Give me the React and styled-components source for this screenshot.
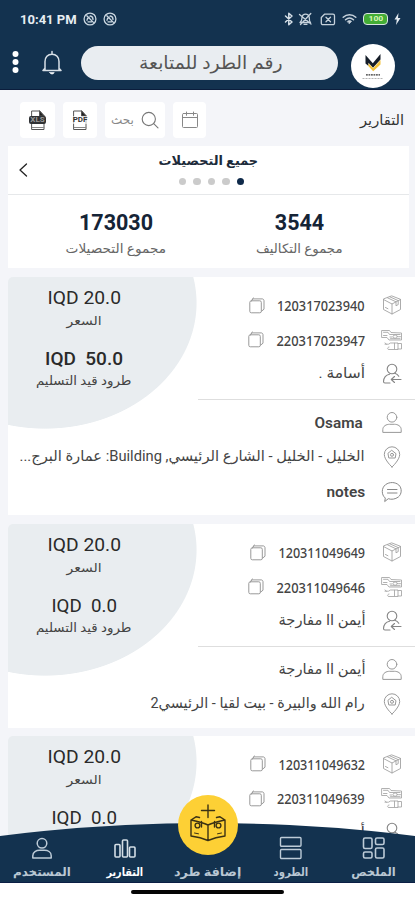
import React, { useLayoutEffect, useRef, useState } from 'react';
import styled, { createGlobalStyle } from 'styled-components';

const navy = '#13324f';
const sans = `Roboto, "DejaVu Sans", sans-serif`;

const GlobalStyle = createGlobalStyle`
  * { box-sizing: border-box; }
  body { margin: 0; background: #f4f5f9; font-family: ${sans}; }
`;

const TextBox = styled.span`
  display: flex;
  justify-content: center;
  flex: none;
  width: ${(p) => p.$width}px;
  height: ${(p) => p.$line || 20}px;
  line-height: ${(p) => p.$line || 20}px;
  font-family: ${(p) => p.$family || sans};
  font-size: ${(p) => p.$size}px;
  font-weight: ${(p) => p.$weight || 400};
  color: ${(p) => p.$color || '#444'};
  white-space: pre;
`;
const TextRun = styled.span`
  flex: none;
  display: block;
`;

/* Keeps a label at its set width whatever font the device falls back to. */
function Text({ width, size, weight, color, line, family, dir, children }) {
  const ref = useRef(null);
  const [scale, setScale] = useState(1);
  useLayoutEffect(() => {
    const natural = ref.current.offsetWidth;
    if (natural) setScale(width / natural);
  }, [width, children]);
  return (
    <TextBox $width={width} $size={size} $weight={weight} $color={color} $line={line} $family={family} dir={dir}>
      <TextRun ref={ref} style={{ transform: `scaleX(${scale})` }}>{children}</TextRun>
    </TextBox>
  );
}

const Screen = styled.div`
  position: relative;
  display: flex;
  flex-direction: column;
  width: 415px;
  height: 900px;
  overflow: hidden;
  background: #f4f5f9;
`;
const Header = styled.header`
  flex: none;
  height: 90px;
  background: ${navy};
  border-bottom: 1px solid #0b1d3c;
`;
const StatusBar = styled.div`
  display: flex;
  align-items: center;
  height: 38px;
  padding: 0 14px 0 20px;
`;
const StatusLeft = styled.div`
  display: flex;
  align-items: center;
  gap: 6px;
  flex: 1;
`;
const StatusRight = styled.div`
  display: flex;
  align-items: center;
`;
const Gap = styled.span`
  flex: none;
  width: ${(p) => p.$w}px;
`;
const AppBar = styled.div`
  display: flex;
  align-items: flex-start;
  padding: 6px 19px 0 11px;
  height: 51px;
`;
const BarSlot = styled.span`
  display: flex;
  flex: none;
  padding-top: 6px;
`;
const SearchPill = styled.div`
  display: flex;
  align-items: center;
  justify-content: center;
  width: 257px;
  height: 34px;
  margin: 2px 13px 0 19px;
  padding: 0 0 1px 2px;
  border-radius: 17px;
  background: #e9edf1;
`;
const Avatar = styled.div`
  display: flex;
  width: 44px;
  height: 44px;
  border-radius: 50%;
  background: #fff;
`;
const Toolbar = styled.div`
  display: flex;
  align-items: center;
  flex: none;
  height: 56px;
  padding: 4px 11px 0 20px;
`;
const ToolButton = styled.div`
  display: flex;
  align-items: center;
  justify-content: center;
  gap: 7px;
  width: ${(p) => p.$w}px;
  height: 36px;
  margin-right: 8px;
  border-radius: 4px;
  background: #fff;
`;
const Spacer = styled.div`
  flex: 1;
`;
const Summary = styled.section`
  flex: none;
  width: 401px;
  height: 122px;
  margin-left: 8px;
  background: #fff;
`;
const SummaryHead = styled.div`
  display: grid;
  grid-template-columns: 30px 1fr 30px;
  align-items: center;
  height: 49px;
  border-bottom: 1px solid #e6e8ea;
`;
const Carousel = styled.div`
  display: flex;
  flex-direction: column;
  align-items: center;
  gap: 7px;
  padding-bottom: 4px;
`;
const BackSlot = styled.div`
  display: flex;
  justify-content: center;
`;
const Dots = styled.div`
  display: flex;
  gap: 7px;
  padding-left: 6px;
`;
const Dot = styled.span`
  width: 7.6px;
  height: 7.6px;
  border-radius: 50%;
  background: ${(p) => (p.$on ? '#0f2a4a' : '#cbcbcb')};
`;
const Totals = styled.div`
  display: grid;
  grid-template-columns: 216px 151px;
  padding-top: 16px;
`;
const Total = styled.div`
  display: flex;
  flex-direction: column;
  align-items: center;
  gap: 4px;
`;
const Card = styled.article`
  display: grid;
  grid-template-columns: 152px 1fr;
  flex: none;
  width: 407px;
  margin: ${(p) => p.$top}px 0 0 8px;
  padding-bottom: 6px;
  border-top-left-radius: 5px;
  background: radial-gradient(ellipse 152px 126px at 37px 26px, #e9edf0 99.4%, #fff 100%);
`;
const Prices = styled.div`
  display: flex;
  flex-direction: column;
  align-items: center;
  padding-top: 11px;
`;
const PriceGap = styled.div`
  height: ${(p) => p.$h}px;
`;
const Shipment = styled.div`
  display: flex;
  flex-direction: column;
  padding: 11px 0 7px;
`;
const Recipient = styled.div`
  grid-column: 1 / -1;
  padding-top: 6px;
`;
const Rule = styled.div`
  grid-column: 1 / -1;
  height: 1px;
  margin-left: 190px;
  background: #dedede;
`;
const Row = styled.div`
  display: flex;
  align-items: center;
  direction: rtl;
  height: 34.5px;
  padding-right: 12px;
`;
const RowIcon = styled.span`
  display: flex;
  flex: none;
  width: 22px;
  margin-left: ${(p) => p.$gap || 16}px;
`;
const CopyIcon = styled.span`
  display: flex;
  margin-right: 12px;
`;
const Nav = styled.nav`
  position: absolute;
  left: 0;
  bottom: 0;
  width: 415px;
  height: 77px;
`;
const NavItems = styled.div`
  direction: rtl;
  display: grid;
  grid-template-columns: repeat(5, 83px);
  height: 60px;
  background: ${navy};
  border-bottom: 1px solid #0b1f45;
  clip-path: circle(1670px at 50% 1670px);
`;
const NavItem = styled.div`
  display: flex;
  flex-direction: column;
  align-items: center;
  justify-content: flex-end;
  gap: 2px;
`;
const HomeArea = styled.div`
  display: flex;
  justify-content: center;
  height: 17px;
  padding-top: 7px;
  background: #fff;
`;
const HomeBar = styled.div`
  width: 153px;
  height: 4px;
  border-radius: 2px;
  background: #050505;
`;
const AddButton = styled.div`
  position: absolute;
  left: 178px;
  top: -28px;
  display: flex;
  align-items: center;
  justify-content: center;
  width: 60px;
  height: 60px;
  border-radius: 50%;
  background: #fdd035;
`;

function Svg({ w, h, stroke = '#999', sw = 1, fill = 'none', children }) {
  return (
    <svg width={w} height={h} viewBox={`0 0 ${w} ${h}`} fill={fill} stroke={stroke} strokeWidth={sw} strokeLinecap="round" strokeLinejoin="round">
      {children}
    </svg>
  );
}

const MutedRing = () => (
  <Svg w={14} h={14} stroke="#cbd7e1" sw={1.3}>
    <circle cx="7" cy="7" r="5.9" />
    <path d="M3.8 3.8l6.6 6.6M4 8.3c0-2 1-2.8 2.2-3.2M7.2 4c2 .3 2.8 1.5 2.8 3.4M5 9.8h3.6" />
  </Svg>
);
const Bluetooth = () => (
  <Svg w={10} h={14} stroke="#d5dfe7" sw={1.5}><path d="M1.5 4l6.500 6-3.200 2.800V1.200L8 4l-6.500 6" /></Svg>
);
const MutedBell = () => (
  <Svg w={15} h={14} stroke="#c6d2dc" sw={1.3}>
    <path d="M2 10.500h10.500c-1.400-1.500-1.200-3-1.200-5C11 3.500 9.500 2.200 7.500 2.200S4.200 3.500 4 5.500c0 2 .1 3.500-2 5M6 12.300h3M1.500 2.500l11.500 9.500M12.800 1.500L2.500 12.500" />
  </Svg>
);
const NoSim = () => (
  <Svg w={16} h={13} stroke="#c6d2dc" sw={1.3}>
    <path d="M4.500 1.200H13a1.500 1.500 0 0 1 1.500 1.500v7.500a1.500 1.500 0 0 1-1.500 1.500H2.800a1.500 1.500 0 0 1-1.500-1.500V4.500z" />
    <path d="M6 4.300l4.500 4.500M10.500 4.300L6 8.800" />
  </Svg>
);
const Wifi = () => (
  <Svg w={15} h={12} stroke="#c6d2dc" sw={1.5}>
    <path d="M1.200 4.300c3.700-3.400 8.900-3.400 12.600 0M3.500 6.700c2.400-2.100 5.600-2.100 8 0" />
    <path d="M5.500 8.300c1.300-1 2.700-1 4 0l-2 2.200z" fill="#c6d2dc" strokeWidth=".8" />
  </Svg>
);
const BatteryShell = styled.span`
  display: flex;
  align-items: center;
  justify-content: center;
  width: 25px;
  height: 12px;
  border: 1.5px solid #d9e4e2;
  border-radius: 4px;
  background: #43ad35;
`;
const Bolt = () => (
  <Svg w={7} h={12} stroke="none" fill="#e3eaf0"><path d="M4.500 0L.5 6.500h2.300L2 12l4.500-7H4z" /></Svg>
);
const Kebab = () => (
  <Svg w={9} h={26} stroke="none" fill="#fff">
    <circle cx="4.500" cy="4" r="3" /><circle cx="4.500" cy="12" r="3" /><circle cx="4.500" cy="20" r="3" />
  </Svg>
);
const Bell = () => (
  <Svg w={20} h={26} stroke="#d8e0e7" sw={1.5}>
    <path d="M1 20.500h18M3 20.200V11.500c0-4 2.700-7.300 7-7.300s7 3.300 7 7.300v8.700M10 4V1.500M1 20.500l2-2.200M19 20.500l-2-2.200" />
    <path d="M7.800 22.500h4.400c-.5 2-3.900 2-4.400 0z" fill="#fff" strokeWidth=".8" />
  </Svg>
);
const Logo = () => (
  <Svg w={44} h={44} stroke="none">
    <path d="M14.500 11l7.300 8.300L29.500 10v5.600L22 23.700l-4.500-5V22l-3-2.500z" fill="#151d28" />
    <path d="M17.500 19.300l4.700 5L29.500 16v4.600l-7.300 6.600-4.700-5z" fill="#f2c23b" />
    <path d="M15 30.800h14" stroke="#333" strokeWidth="1.200" strokeDasharray="1.800 .7" strokeLinecap="butt" />
    <path d="M11.500 34.500h21" stroke="#aaa" strokeWidth=".9" strokeDasharray="2 1" strokeLinecap="butt" />
  </Svg>
);
const FileBadge = styled.span`
  display: grid;
  place-items: center;
  width: 18px;
  height: 22px;
`;
const FileArt = styled.span`
  grid-area: 1 / 1;
  display: flex;
`;
const FileTag = styled.span`
  grid-area: 1 / 1;
  z-index: 1;
  width: ${(p) => (p.$solid ? 17 : 18)}px;
  height: 8px;
  border-radius: 2px;
  background: ${(p) => (p.$solid ? '#303234' : 'rgba(255,255,255,.6)')};
  color: ${(p) => (p.$solid ? '#999' : '#333')};
  font: 700 8px/8px Roboto, sans-serif;
  text-align: center;
`;
const FileIcon = ({ label, solid }) => (
  <FileBadge>
    <FileArt>
      <Svg w={16} h={21} stroke="#555" sw={1}>
        <path d="M2 1h7.500L14 6v13.500H2z" /><path d="M9.500 1v5H14z" fill="#222" /><path d="M2.300 17.500h11.500" stroke="#888" />
      </Svg>
    </FileArt>
    <FileTag $solid={solid}>{label}</FileTag>
  </FileBadge>
);
const Magnifier = () => (
  <Svg w={18} h={18} stroke="#777" sw={1.1}><circle cx="7.800" cy="8" r="6.600" /><path d="M12.700 12.700l4.300 4.200" /></Svg>
);
const Calendar = () => (
  <Svg w={18} h={18} stroke="#888" sw={1}><rect x="1.500" y="2.500" width="15" height="14" rx="1" /><path d="M1.500 6.500h15M5.500 1v3.300M12.500 1v3.300" /></Svg>
);
const Chevron = () => (
  <Svg w={10} h={14} stroke="#222" sw={1.3}><path d="M8.500 1L2 7l6.500 6" /></Svg>
);
const Copy = () => (
  <Svg w={16} h={17} stroke="#999" sw={1}>
    <rect x=".8" y="3.800" width="11.500" height="12" rx="1.500" /><path d="M2.800 3.500l1-1.600h9.400c1 0 1.800.8 1.800 1.800v8.500l-2.500 2M3 2.400L4.500 1" />
  </Svg>
);
const BoxIcon = () => (
  <Svg w={22} h={20} stroke="#a3a3a3" sw={0.9}>
    <path d="M11 1l8.500 3.300v10.200L11 19l-8.500-4.500V4.300zM2.500 4.500L11 9l8.500-4.500M11 9v10M6.500 2.800L15 6.800v4l2.200-1.200V5.600L9 1.900M4.500 12.500l2.400 1.200" />
  </Svg>
);
const TransferIcon = () => (
  <Svg w={22} h={22} stroke="#a8a8a8" sw={0.9}>
    <path d="M1 1.500h7.500l1.500 2 10.500.5v7H8L6 8.500H1zM2.500 3.300h4.500l1.500 2.200h10.500M2.500 6.500h3.500M9 8h2M9.500 9.700h9.500M17.500 7.700h2" />
    <ellipse cx="14.200" cy="7.600" rx="2.200" ry="1.600" />
    <path d="M4 15.200h3.500l2-1.200h4v6.500H8c-2.300 0-1.500-2.500 0-2.500M13.500 14H17v6.500h-3.500M17 14.500h3.500v5.500H17M4 14l1.500 1.200" />
  </Svg>
);
const SenderIcon = () => (
  <Svg w={22} h={22} stroke="#858585" sw={1.1}>
    <circle cx="11" cy="6" r="4.800" /><path d="M8.500 11.300C5 12 2.800 14.500 2.500 18.500c0 1 .5 1.500 1.500 1.500h5M13.800 10.300c1.800.6 3 1.500 4 3M10.500 16.500h9.500M13.500 13.500l-3.200 3 3.200 3" />
  </Svg>
);
const PersonIcon = ({ stroke = '#999', sw = 1 }) => (
  <Svg w={22} h={23} stroke={stroke} sw={sw}>
    <circle cx="11" cy="6.300" r="4.800" /><path d="M1.800 21v-2.300c0-3.700 3.500-5.400 6.800-5.400h4.800c3.300 0 6.800 1.700 6.800 5.400V21z" />
  </Svg>
);
const PinIcon = () => (
  <Svg w={22} h={22} stroke="#999"><path d="M11 21S3.300 14 3.300 8.500a7.700 7.700 0 0 1 15.400 0C18.700 14 11 21 11 21z" /><path d="M11 4.500l4 3.200-.8 4.300H7.800L7 7.700z" /><circle cx="11" cy="8.800" r="1.500" /></Svg>
);
const NoteIcon = () => (
  <Svg w={22} h={22} stroke="#888"><path d="M4 16.800C.2 13.800.3 7 4.500 3.700c4-3 9.800-2.800 13.300.3 3.500 3.300 3 9.300-.5 12-3 2.300-7 2.800-10 1.700L4 20.300zM6.500 8.500h9.500M6.500 12h9.500" /></Svg>
);
const GridIcon = () => (
  <Svg w={24} h={24} stroke="#bdcbd7" sw={1.6}>
    <rect x="1.500" y="2" width="8.500" height="10.500" rx="1.500" /><rect x="13.500" y="2" width="8.500" height="6.500" rx="1.500" />
    <rect x="1.500" y="16" width="8.500" height="6" rx="1.500" /><rect x="13.500" y="12" width="8.500" height="10" rx="1.500" />
  </Svg>
);
const StackIcon = () => (
  <Svg w={24} h={24} stroke="#bdcbd7" sw={1.4}><rect x="1.500" y="1.500" width="20.500" height="8.800" rx="1" /><rect x="1.500" y="13.500" width="20.500" height="9" rx="1" /></Svg>
);
const BarsIcon = () => (
  <Svg w={24} h={22} stroke="#d4dee6" sw={1.6}><rect x="2" y="6.500" width="5" height="12.500" rx="1" /><rect x="9.500" y="2" width="5" height="17" rx="1" /><rect x="16.500" y="9" width="5.500" height="10" rx="1" /></Svg>
);
const ParcelPlus = () => (
  <Svg w={40} h={42} stroke="#3b3214" sw={1.4}>
    <path d="M20 1v12.500M13.500 6.500h13" />
    <path d="M11.500 13.500L8 12.800 3 16M28.500 13.500l3.500-.7 5 3.200M3 16c6 1.200 12 2.500 17 5 5-2.500 11-3.800 17-5M3 16v16c6 .8 12 2.300 17 4.500 5-2.200 11-3.700 17-4.500V16M20 21v15.500" />
    <path d="M13.500 17.500v5.500M26.500 17.500v5.500" />
    <circle cx="9.500" cy="21.500" r="2.400" /><circle cx="30.500" cy="21.500" r="2.400" />
    <path d="M6.500 29l4 .8M33.500 29l-4 .8" strokeWidth="1" />
  </Svg>
);

const numberFont = `"Noto Sans", "DejaVu Sans", sans-serif`;

const cards = [
  {
    top: 9, due: ['IQD  50.0', 78], weight: 500,
    ids: [['120317023940', 88], ['220317023947', 89]],
    sender: ['أسامة .', 47],
    recipient: [
      { icon: PersonIcon, text: 'Osama', w: 48, gap: 18, latin: true },
      { icon: PinIcon, text: 'الخليل - الخليل - الشارع الرئيسي, Building: عمارة البرج...', w: 345 },
      { icon: NoteIcon, text: 'notes', w: 39, latin: true },
    ],
  },
  {
    top: 9, due: ['IQD  0.0', 66],
    ids: [['120311049649', 87], ['220311049646', 89]],
    sender: ['أيمن اا مفارجة', 87],
    recipient: [
      { icon: PersonIcon, text: 'أيمن اا مفارجة', w: 87 },
      { icon: PinIcon, text: 'رام الله والبيرة - بيت لقيا - الرئيسي2', w: 214 },
    ],
  },
  {
    top: 8, due: ['IQD  0.0', 66],
    ids: [['120311049632', 87], ['220311049639', 88]],
    sender: ['أيمن', 31],
    recipient: [],
  },
];

function ShipmentCard({ data }) {
  return (
    <Card $top={data.top}>
      <Prices>
        <Text width={73} size={19} color="#2a2a2a">IQD 20.0</Text>
        <PriceGap $h={4} />
        <Text width={35} size={12} line={18} dir="rtl">السعر</Text>
        <PriceGap $h={19} />
        <Text width={data.due[1]} size={19} weight={data.weight} color="#2a2a2a">{data.due[0]}</Text>
        <PriceGap $h={3} />
        <Text width={95} size={12.5} line={18} dir="rtl">طرود قيد التسليم</Text>
      </Prices>
      <Shipment>
        {data.ids.map(([id, w], i) => (
          <Row key={id}>
            <RowIcon>{i ? <TransferIcon /> : <BoxIcon />}</RowIcon>
            <Text width={w} size={14.5} weight={500} family={numberFont} dir="ltr">{id}</Text>
            <CopyIcon><Copy /></CopyIcon>
          </Row>
        ))}
        <Row>
          <RowIcon><SenderIcon /></RowIcon>
          <Text width={data.sender[1]} size={14.5} line={20} dir="rtl">{data.sender[0]}</Text>
        </Row>
      </Shipment>
      <Rule />
      <Recipient>
        {data.recipient.map(({ icon: Icon, text, w, gap, latin }) => (
          <Row key={text}>
            <RowIcon $gap={gap}><Icon /></RowIcon>
            <Text width={w} size={latin ? 15 : 14.5} weight={latin ? 600 : 400} line={22} dir="rtl">{text}</Text>
          </Row>
        ))}
      </Recipient>
    </Card>
  );
}

export default function App() {
  return (
    <Screen>
      <GlobalStyle />
      <Header>
        <StatusBar>
          <StatusLeft>
            <Text width={57} size={13.5} weight={700} color="#e6edf2">10:41 PM</Text>
            <MutedRing />
            <MutedRing />
          </StatusLeft>
          <StatusRight>
            <Bluetooth /><Gap $w={4} /><MutedBell /><Gap $w={7} /><NoSim /><Gap $w={6} /><Wifi /><Gap $w={6} />
            <BatteryShell><Text width={15} size={8} weight={700} line={10} color="#d8f5b8">100</Text></BatteryShell>
            <Gap $w={6} /><Bolt />
          </StatusRight>
        </StatusBar>
        <AppBar>
          <BarSlot><Kebab /></BarSlot>
          <Gap $w={22} />
          <BarSlot><Bell /></BarSlot>
          <SearchPill>
            <Text width={144} size={18} line={28} color="#555" dir="rtl">رقم الطرد للمتابعة</Text>
          </SearchPill>
          <Avatar><Logo /></Avatar>
        </AppBar>
      </Header>
      <Toolbar>
        <ToolButton $w={35}><FileIcon label="XLS" solid /></ToolButton>
        <ToolButton $w={34}><FileIcon label="PDF" /></ToolButton>
        <ToolButton $w={60}>
          <Text width={23} size={12} color="#888" dir="rtl">بحث</Text>
          <Magnifier />
        </ToolButton>
        <ToolButton $w={33}><Calendar /></ToolButton>
        <Spacer />
        <Text width={44} size={14} line={22} color="#333" dir="rtl">التقارير</Text>
      </Toolbar>
      <Summary>
        <SummaryHead>
          <BackSlot><Chevron /></BackSlot>
          <Carousel>
            <Text width={100} size={13} weight={700} line={20} color="#1c2b3a" dir="rtl">جميع التحصيلات</Text>
            <Dots><Dot /><Dot /><Dot /><Dot /><Dot $on /></Dots>
          </Carousel>
        </SummaryHead>
        <Totals>
          <Total>
            <Text width={74} size={21.5} weight={700} line={24} color="#152436">173030</Text>
            <Text width={101} size={13} line={20} color="#666" dir="rtl">مجموع التحصيلات</Text>
          </Total>
          <Total>
            <Text width={49} size={21.5} weight={700} line={24} color="#152436">3544</Text>
            <Text width={87} size={13} line={20} color="#666" dir="rtl">مجموع التكاليف</Text>
          </Total>
        </Totals>
      </Summary>
      {cards.map((c) => <ShipmentCard key={c.ids[0][0]} data={c} />)}
      <Nav>
        <NavItems>
          <NavItem><GridIcon /><Text width={45} size={11.5} weight={700} line={20} color="#b9c7d3" dir="rtl">الملخص</Text></NavItem>
          <NavItem><StackIcon /><Text width={35} size={11.5} weight={700} line={20} color="#b9c7d3" dir="rtl">الطرود</Text></NavItem>
          <NavItem><Text width={67} size={12} weight={700} line={20} color="#b9c7d3" dir="rtl">إضافة طرد</Text></NavItem>
          <NavItem><BarsIcon /><Text width={37} size={11.5} weight={700} line={20} color="#fff" dir="rtl">التقارير</Text></NavItem>
          <NavItem><PersonIcon stroke="#bdcbd7" sw={1.5} /><Text width={58} size={11.5} weight={700} line={20} color="#b9c7d3" dir="rtl">المستخدم</Text></NavItem>
        </NavItems>
        <HomeArea><HomeBar /></HomeArea>
        <AddButton><ParcelPlus /></AddButton>
      </Nav>
    </Screen>
  );
}
